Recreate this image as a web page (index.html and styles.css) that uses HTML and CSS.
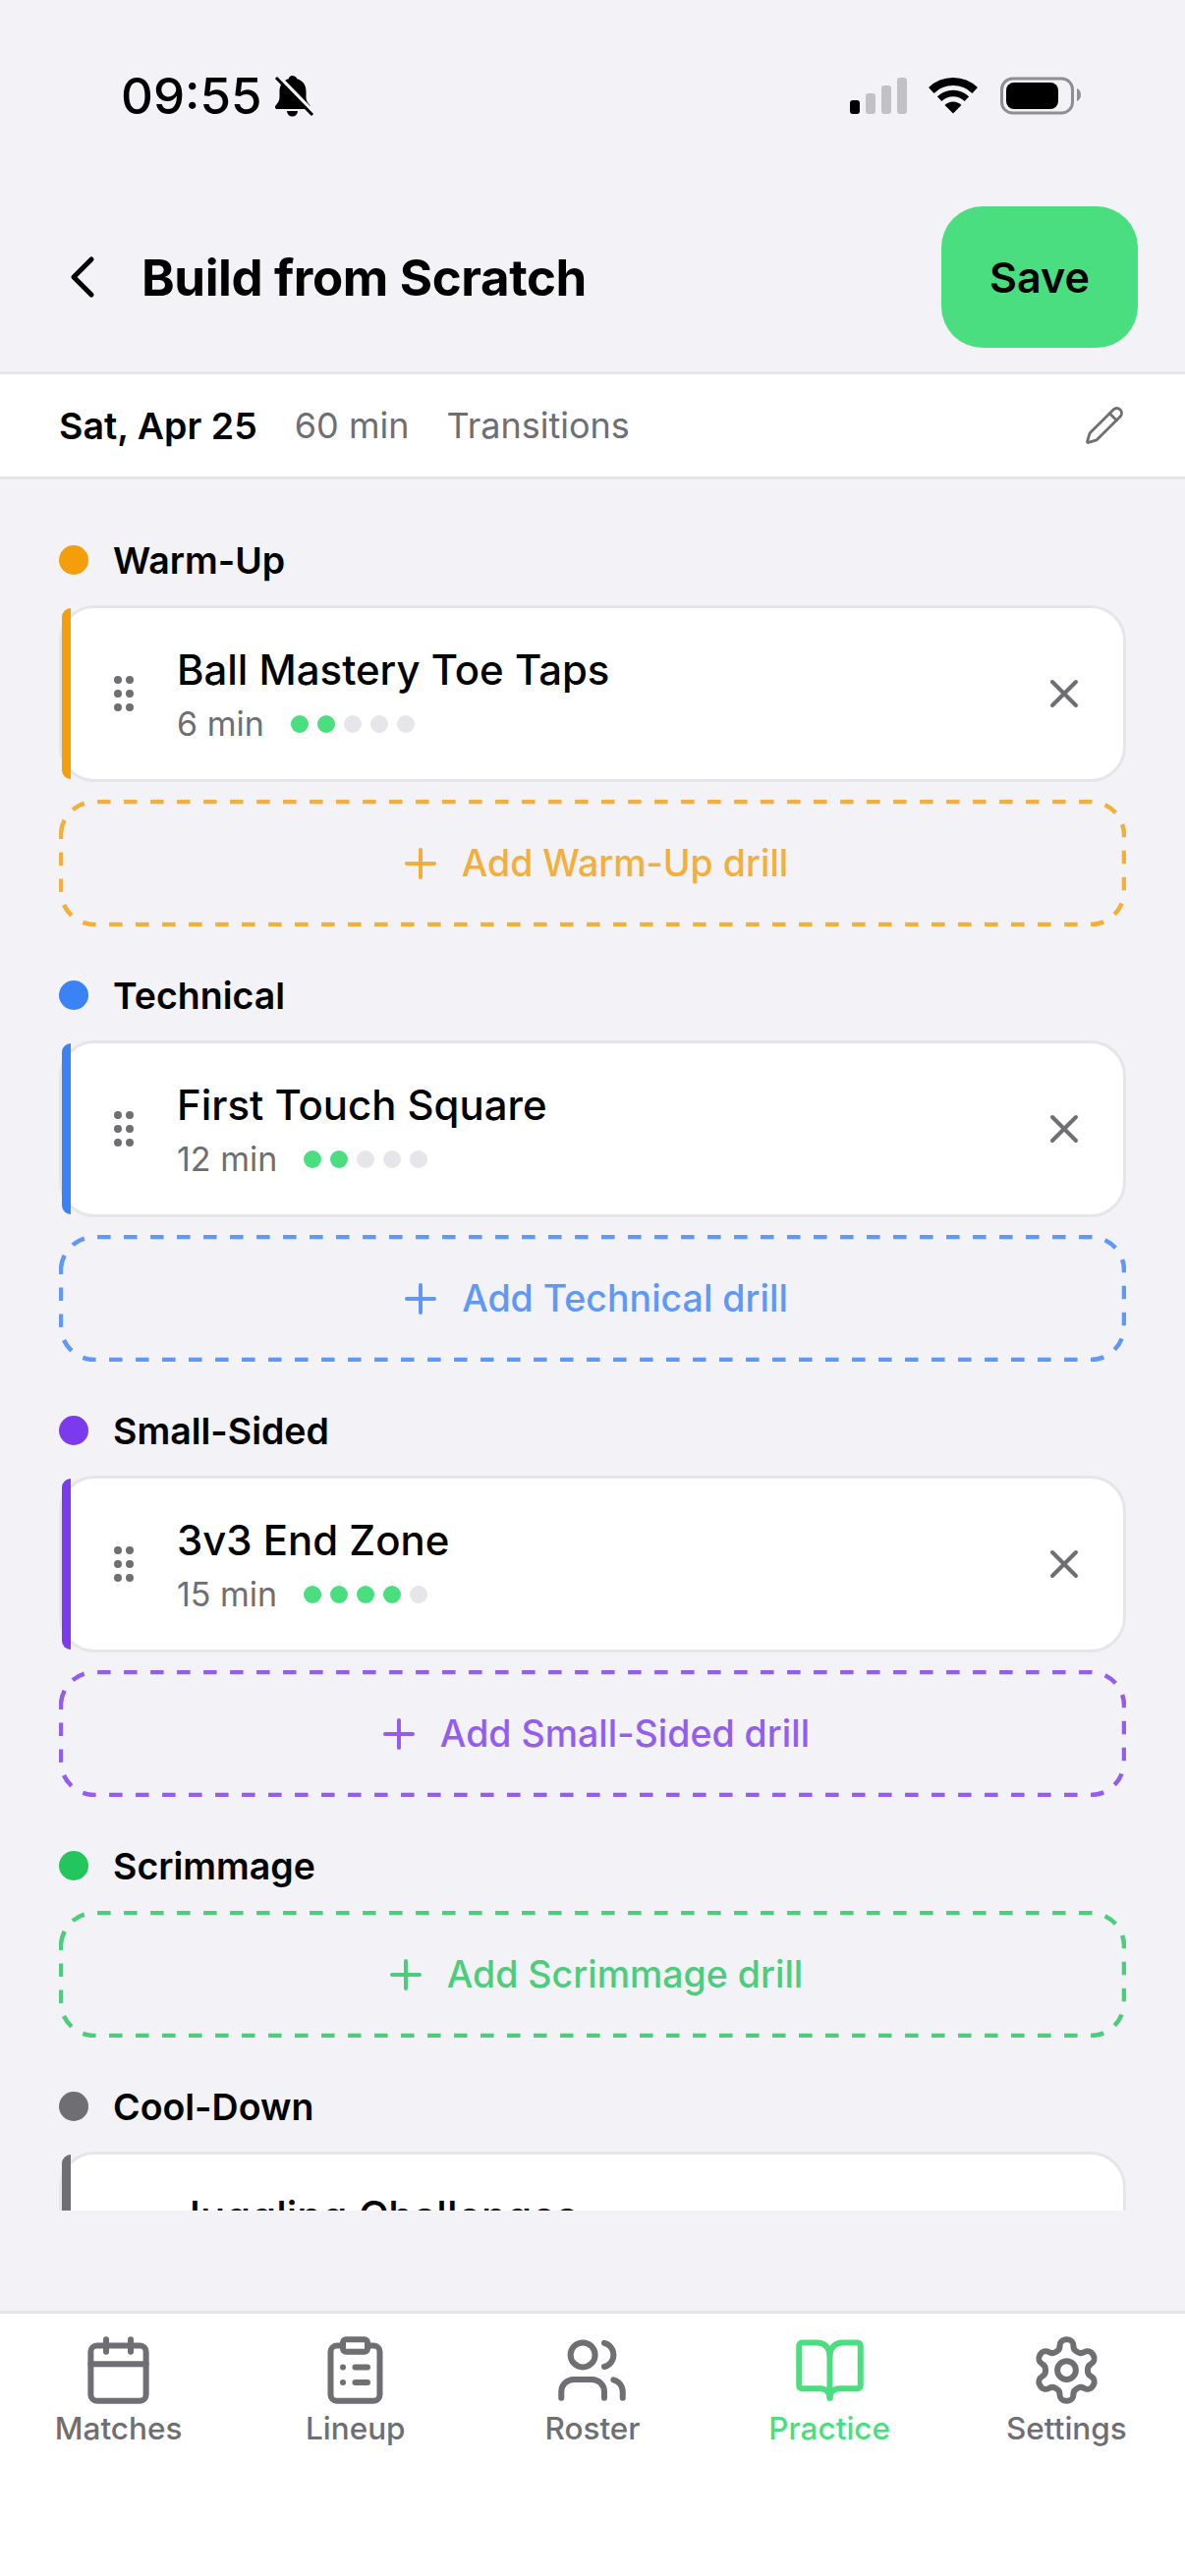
FILE: index.html

```html
<!DOCTYPE html>
<html lang="en">
<head>
    <meta charset="UTF-8">
    <meta name="viewport" content="width=device-width, initial-scale=1.0">
    <title>Build from Scratch</title>
    <link rel="stylesheet" href="styles.css">
</head>
<body>
    <svg class="defs" aria-hidden="true">
        <symbol id="i-grip" viewBox="0 0 24 24"><circle cx="9" cy="5" r="1"/><circle cx="9" cy="12" r="1"/><circle cx="9" cy="19" r="1"/><circle cx="15" cy="5" r="1"/><circle cx="15" cy="12" r="1"/><circle cx="15" cy="19" r="1"/></symbol>
        <symbol id="i-x" viewBox="0 0 24 24"><path d="M18 6 6 18"/><path d="m6 6 12 12"/></symbol>
        <symbol id="i-plus" viewBox="0 0 24 24"><path d="M5 12h14"/><path d="M12 5v14"/></symbol>
        <symbol id="i-dash" viewBox="0 0 1086 129"><path d="M2 36A34 34 0 0 1 36 2H1050A34 34 0 0 1 1084 36V93A34 34 0 0 1 1050 127H36A34 34 0 0 1 2 93V33.600"/></symbol>
    </svg>

    <div class="status-bar">
        <div class="status-left">
            <span class="time">09:55</span>
            <svg class="bell" viewBox="0 0 60 55">
                <path d="M26.5 7c-2 0-3.4 1.4-3.8 3.2C16.500 12 13.500 17 13.500 23v6c0 3.500-2 6-4 8.500-1.200 1.600-.3 3.500 1.700 3.500h31.600c2 0 2.900-1.900 1.700-3.500-2-2.500-4-5-4-8.500v-6c0-6-3-11-9.200-12.800C30.900 8.400 28.500 7 26.500 7z"/>
                <path d="M21 43a5.500 5.500 0 0 0 11 0z"/>
                <path class="bell-gap" d="M12 8l37 38"/>
                <path class="bell-slash" d="M10 9l37 38"/>
            </svg>
        </div>
        <svg class="status-icons" viewBox="0 0 250 55">
            <rect x="10" y="32" width="10" height="14" rx="3"/>
            <rect class="bar-off" x="26" y="25" width="10" height="21" rx="3"/>
            <rect class="bar-off" x="42" y="17" width="10" height="29" rx="3"/>
            <rect class="bar-off" x="58" y="9" width="10" height="37" rx="3"/>
            <path class="wifi-arc" stroke-width="8" d="M92.800 22A32 32 0 0 1 137.200 22"/>
            <path class="wifi-arc" stroke-width="6.500" d="M101.100 30.600A20 20 0 0 1 128.900 30.600"/>
            <path d="M115 45.500 106.500 37A12 12 0 0 1 123.500 37z"/>
            <rect class="batt-body" x="164.500" y="10" width="72" height="35" rx="11"/>
            <rect x="169" y="14" width="53" height="27" rx="8"/>
            <path class="batt-nub" d="M241 20c2.500 1 4 3.500 4 6.500s-1.500 5.500-4 6.500z"/>
        </svg>
    </div>

    <header class="top-bar">
        <svg class="back" viewBox="0 0 24 24"><path d="m15 18-6-6 6-6"/></svg>
        <h1>Build from Scratch</h1>
        <button class="save" type="button">Save</button>
    </header>

    <div class="summary">
        <span class="summary-date">Sat, Apr 25</span>
        <span class="summary-item">60 min</span>
        <span class="summary-item">Transitions</span>
        <svg class="edit" viewBox="0 0 24 24"><path d="M21.174 6.812a1 1 0 0 0-3.986-3.987L3.842 16.174a2 2 0 0 0-.5.83l-1.321 4.352a.5.5 0 0 0 .623.622l4.353-1.32a2 2 0 0 0 .83-.497z"/><path d="m15 5 4 4"/></svg>
    </div>

    <main class="plan">
        <section class="block warm">
            <div class="block-title"><i class="block-dot"></i>Warm-Up</div>
            <div class="drill">
                <i class="drill-accent"></i>
                <svg class="grip"><use href="#i-grip"/></svg>
                <div class="drill-info">
                    <div class="drill-name">Ball Mastery Toe Taps</div>
                    <div class="drill-meta">6 min <span class="level"><i class="on"></i><i class="on"></i><i></i><i></i><i></i></span></div>
                </div>
                <svg class="remove"><use href="#i-x"/></svg>
            </div>
            <div class="add-drill">
                <svg class="dash"><use href="#i-dash"/></svg>
                <svg class="plus"><use href="#i-plus"/></svg>
                <span>Add Warm-Up drill</span>
            </div>
        </section>

        <section class="block tech">
            <div class="block-title"><i class="block-dot"></i>Technical</div>
            <div class="drill">
                <i class="drill-accent"></i>
                <svg class="grip"><use href="#i-grip"/></svg>
                <div class="drill-info">
                    <div class="drill-name">First Touch Square</div>
                    <div class="drill-meta">12 min <span class="level"><i class="on"></i><i class="on"></i><i></i><i></i><i></i></span></div>
                </div>
                <svg class="remove"><use href="#i-x"/></svg>
            </div>
            <div class="add-drill">
                <svg class="dash"><use href="#i-dash"/></svg>
                <svg class="plus"><use href="#i-plus"/></svg>
                <span>Add Technical drill</span>
            </div>
        </section>

        <section class="block small">
            <div class="block-title"><i class="block-dot"></i>Small-Sided</div>
            <div class="drill">
                <i class="drill-accent"></i>
                <svg class="grip"><use href="#i-grip"/></svg>
                <div class="drill-info">
                    <div class="drill-name">3v3 End Zone</div>
                    <div class="drill-meta">15 min <span class="level"><i class="on"></i><i class="on"></i><i class="on"></i><i class="on"></i><i></i></span></div>
                </div>
                <svg class="remove"><use href="#i-x"/></svg>
            </div>
            <div class="add-drill">
                <svg class="dash"><use href="#i-dash"/></svg>
                <svg class="plus"><use href="#i-plus"/></svg>
                <span>Add Small-Sided drill</span>
            </div>
        </section>

        <section class="block scrim">
            <div class="block-title"><i class="block-dot"></i>Scrimmage</div>
            <div class="add-drill">
                <svg class="dash"><use href="#i-dash"/></svg>
                <svg class="plus"><use href="#i-plus"/></svg>
                <span>Add Scrimmage drill</span>
            </div>
        </section>

        <section class="block cool">
            <div class="block-title"><i class="block-dot"></i>Cool-Down</div>
            <div class="drill">
                <i class="drill-accent"></i>
                <svg class="grip"><use href="#i-grip"/></svg>
                <div class="drill-info">
                    <div class="drill-name">Juggling Challenges</div>
                    <div class="drill-meta"><span class="level"><i class="on"></i><i></i><i></i><i></i><i></i></span></div>
                </div>
                <svg class="remove"><use href="#i-x"/></svg>
            </div>
        </section>
    </main>

    <nav class="tabs">
        <div class="tab">
            <svg viewBox="0 0 24 24"><path d="M8 2v4"/><path d="M16 2v4"/><rect width="18" height="18" x="3" y="4" rx="2"/><path d="M3 10h18"/></svg>
            <span>Matches</span>
        </div>
        <div class="tab">
            <svg viewBox="0 0 24 24"><rect width="8" height="4" x="8" y="2" rx="1"/><path d="M16 4h2a2 2 0 0 1 2 2v14a2 2 0 0 1-2 2H6a2 2 0 0 1-2-2V6a2 2 0 0 1 2-2h2"/><path d="M12 11h4"/><path d="M12 16h4"/><path d="M8 11h.01"/><path d="M8 16h.01"/></svg>
            <span>Lineup</span>
        </div>
        <div class="tab">
            <svg viewBox="0 0 24 24"><path d="M16 21v-2a4 4 0 0 0-4-4H6a4 4 0 0 0-4 4v2"/><circle cx="9" cy="7" r="4"/><path d="M22 21v-2a4 4 0 0 0-3-3.870"/><path d="M16 3.130a4 4 0 0 1 0 7.750"/></svg>
            <span>Roster</span>
        </div>
        <div class="tab active">
            <svg viewBox="0 0 24 24"><path d="M12 7v14"/><path d="M3 18a1 1 0 0 1-1-1V4a1 1 0 0 1 1-1h5a4 4 0 0 1 4 4 4 4 0 0 1 4-4h5a1 1 0 0 1 1 1v13a1 1 0 0 1-1 1h-6a3 3 0 0 0-3 3 3 3 0 0 0-3-3z"/></svg>
            <span>Practice</span>
        </div>
        <div class="tab">
            <svg viewBox="0 0 24 24"><path d="M12.220 2h-.44a2 2 0 0 0-2 2v.18a2 2 0 0 1-1 1.730l-.43.25a2 2 0 0 1-2 0l-.15-.08a2 2 0 0 0-2.730.73l-.22.38a2 2 0 0 0 .73 2.730l.15.1a2 2 0 0 1 1 1.720v.51a2 2 0 0 1-1 1.740l-.15.09a2 2 0 0 0-.73 2.730l.22.38a2 2 0 0 0 2.730.73l.15-.08a2 2 0 0 1 2 0l.43.25a2 2 0 0 1 1 1.730V20a2 2 0 0 0 2 2h.44a2 2 0 0 0 2-2v-.18a2 2 0 0 1 1-1.730l.43-.25a2 2 0 0 1 2 0l.15.08a2 2 0 0 0 2.730-.73l.22-.39a2 2 0 0 0-.73-2.730l-.15-.08a2 2 0 0 1-1-1.740v-.5a2 2 0 0 1 1-1.740l.15-.09a2 2 0 0 0 .73-2.730l-.22-.38a2 2 0 0 0-2.730-.73l-.15.08a2 2 0 0 1-2 0l-.43-.25a2 2 0 0 1-1-1.730V4a2 2 0 0 0-2-2z"/><circle cx="12" cy="12" r="3"/></svg>
            <span>Settings</span>
        </div>
    </nav>
</body>
</html>
```

FILE: styles.css

```css
* {
    box-sizing: border-box;
}

body {
    margin: 0;
    width: 1206px;
    height: 2622px;
    overflow: hidden;
    display: flex;
    flex-direction: column;
    background-color: #f2f2f7;
    color: #000;
    font-family: Inter, "Liberation Sans", sans-serif;
}

.defs {
    display: none;
}

/* status bar */
.status-bar {
    height: 210px;
    padding: 70px 101px 0 123px;
    display: flex;
    justify-content: space-between;
    align-items: flex-start;
}

.status-left {
    display: flex;
}

.time {
    font-size: 51px;
    font-weight: 500;
    line-height: 55px;
}

.bell {
    width: 60px;
    height: 55px;
    margin-left: 4px;
}

.bell-gap {
    stroke: #f2f2f7;
    stroke-width: 5;
}

.bell-slash {
    stroke: #000;
    stroke-width: 3;
}

.status-icons {
    width: 250px;
    height: 55px;
}

.bar-off {
    fill: #c2c2c4;
}

.wifi-arc {
    fill: none;
    stroke: #000;
}

.batt-body {
    fill: none;
    stroke: #8e8e93;
    stroke-width: 3;
}

.batt-nub {
    fill: #8e8e93;
}

/* header */
.top-bar {
    display: flex;
    align-items: center;
    padding: 0 48px 24px;
}

.back {
    width: 72px;
    height: 72px;
    fill: none;
    stroke: #000;
    stroke-width: 1.700;
    stroke-linecap: round;
    stroke-linejoin: round;
}

.top-bar h1 {
    flex: 1;
    margin: 0 0 0 24px;
    font-size: 51px;
    font-weight: 700;
    letter-spacing: -.4px;
}

.save {
    width: 200px;
    height: 144px;
    border: none;
    border-radius: 42px;
    background-color: #4ade80;
    color: #000;
    font-family: inherit;
    font-size: 43px;
    font-weight: 600;
}

/* date / length / theme strip */
.summary {
    height: 110px;
    display: flex;
    align-items: center;
    gap: 38px;
    padding: 0 60px;
    background-color: #fff;
    border-top: 3px solid #e5e5ea;
    border-bottom: 3px solid #e5e5ea;
    font-size: 36px;
}

.summary-date {
    font-size: 37.500px;
    font-weight: 600;
}

.summary-item {
    color: #6e6e73;
}

.edit {
    width: 42px;
    height: 42px;
    margin-left: auto;
    margin-right: 1px;
    fill: none;
    stroke: #6e6e73;
    stroke-width: 1.600;
    stroke-linecap: round;
    stroke-linejoin: round;
}

/* scrolling plan */
.plan {
    height: 1762px;
    overflow: hidden;
    padding: 58px 60px 0;
}

.block {
    margin-bottom: 46px;
}

.warm { --tone: #f59e0b; }
.tech { --tone: #3b82f6; }
.small { --tone: #7c3aed; }
.scrim { --tone: #22c55e; }
.cool { --tone: #6e6e73; }

.block-title {
    display: flex;
    align-items: center;
    gap: 25px;
    height: 48px;
    margin-bottom: 22px;
    font-size: 37.500px;
    font-weight: 600;
}

.block-dot {
    width: 30px;
    height: 30px;
    border-radius: 50%;
    background-color: var(--tone);
}

.drill {
    position: relative;
    display: flex;
    align-items: center;
    margin-bottom: 18px;
    padding: 32px 36px 32px 39px;
    background-color: #fff;
    border: 3px solid #e5e5ea;
    border-radius: 36px;
}

.drill-accent {
    position: absolute;
    left: 0;
    top: 0;
    bottom: 0;
    width: 9px;
    border-radius: 9px 0 0 9px;
    background-color: var(--tone);
}

.grip {
    width: 48px;
    height: 48px;
    flex-shrink: 0;
    fill: #6e6e73;
    stroke: #6e6e73;
    stroke-width: 2;
}

.drill-info {
    flex: 1;
    margin-left: 30px;
}

.drill-name {
    padding-top: 1px;
    margin-bottom: 1px;
    font-size: 41.900px;
    font-weight: 550;
    line-height: 60px;
}

.drill-meta {
    display: flex;
    align-items: center;
    gap: 27px;
    min-height: 48px;
    color: #6e6e73;
    font-size: 34px;
    line-height: 48px;
}

.level {
    display: flex;
    gap: 9px;
}

.level i {
    width: 18px;
    height: 18px;
    border-radius: 50%;
    background-color: #e5e5ea;
}

.level i.on {
    background-color: #4ade80;
}

.remove {
    width: 48px;
    height: 48px;
    flex-shrink: 0;
    fill: none;
    stroke: #6e6e73;
    stroke-width: 2;
    stroke-linecap: round;
}

.add-drill {
    position: relative;
    height: 129px;
    display: flex;
    align-items: center;
    justify-content: center;
    gap: 18px;
    color: var(--tone);
    opacity: .8;
    font-size: 37.500px;
    font-weight: 500;
}

.dash {
    position: absolute;
    left: 0;
    top: 0;
    width: 100%;
    height: 100%;
    fill: none;
    stroke: var(--tone);
    stroke-width: 4.500;
    stroke-dasharray: 13.500 13.500;
    stroke-dashoffset: -2.400;
}

.plus {
    width: 48px;
    height: 48px;
    fill: none;
    stroke: var(--tone);
    stroke-width: 2;
    stroke-linecap: round;
}

/* tab bar */
.tabs {
    margin-top: auto;
    height: 270px;
    display: grid;
    grid-template-columns: repeat(5, 1fr);
    padding-top: 20px;
    background-color: #fff;
    border-top: 3px solid #e5e5ea;
}

.tab {
    display: flex;
    flex-direction: column;
    align-items: center;
    color: #6e6e73;
    font-size: 31.500px;
    font-weight: 500;
    line-height: 44px;
}

.tab svg {
    width: 75px;
    height: 75px;
    fill: none;
    stroke: currentColor;
    stroke-width: 1.920;
    stroke-linecap: round;
    stroke-linejoin: round;
}

.tab.active {
    color: #4ade80;
}
```
